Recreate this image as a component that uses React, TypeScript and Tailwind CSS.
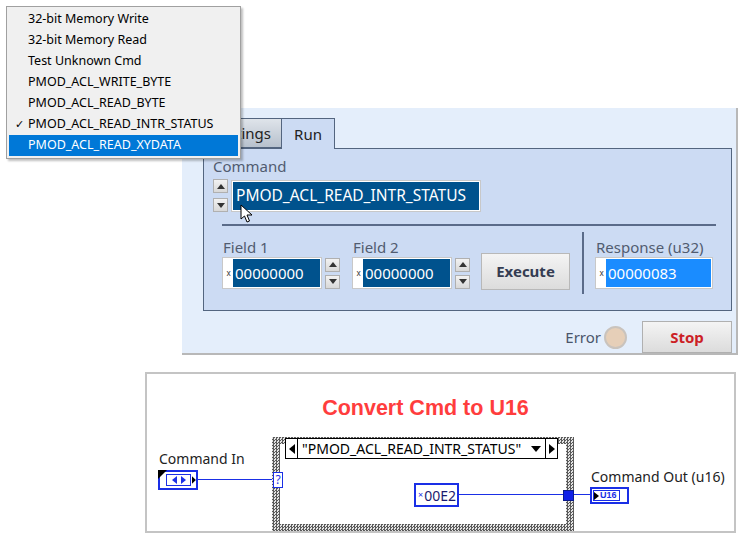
import React from "react";

const ui = "font-['Noto_Sans','Open_Sans',sans-serif]";

const menuItems = [
  "32-bit Memory Write",
  "32-bit Memory Read",
  "Test Unknown Cmd",
  "PMOD_ACL_WRITE_BYTE",
  "PMOD_ACL_READ_BYTE",
  "PMOD_ACL_READ_INTR_STATUS",
  "PMOD_ACL_READ_XYDATA",
];

function Tri({ down }: { down?: boolean }) {
  return (
    <svg width="8" height="5" viewBox="0 0 8 5">
      {down ? <polygon points="0,0 8,0 4,5" fill="#333" /> : <polygon points="0,5 8,5 4,0" fill="#333" />}
    </svg>
  );
}

function SpinBtn({ down }: { down?: boolean }) {
  return (
    <div className="flex h-[14px] w-[15px] items-center justify-center border border-[#b0b0b0] bg-gradient-to-b from-[#f2f2f2] to-[#d8d8d8]">
      <Tri down={down} />
    </div>
  );
}

function Spinner() {
  return (
    <div className="flex flex-col gap-[3px]">
      <SpinBtn />
      <SpinBtn down />
    </div>
  );
}

function NumField({ value, bright }: { value: string; bright?: boolean }) {
  return (
    <div className="flex h-[32px] items-stretch border border-[#c8c8c8] bg-white p-[1px]">
      <span className="flex w-[9px] items-center justify-center text-[8px] leading-none text-[#333]">x</span>
      <div
        className={`flex flex-1 items-center pl-[2px] text-[15px] text-white ${bright ? "bg-[#1a8cff]" : "bg-[#00528d]"}`}
      >
        {value}
      </div>
    </div>
  );
}

function Cursor() {
  return (
    <svg className="absolute left-[240px] top-[204px]" width="14" height="20" viewBox="0 0 14 20">
      <path d="M1 1 L1 15 L4.5 12 L7 18 L9.5 17 L7 11 L12 11 Z" fill="#fff" stroke="#000" strokeWidth="1" />
    </svg>
  );
}

function Panel() {
  return (
    <div className="ml-[182px] mt-[108px] flex h-[247px] w-[556px] flex-col border-b-2 border-r-2 border-[#b8b8b8] bg-[#e4eefb] pl-[21px] pt-[10px]">
      {/* tabs */}
      <div className="relative z-10 flex h-[30px] items-end">
        <div className="flex h-[30px] w-[79px] items-center justify-end border border-[#53657f] bg-gradient-to-b from-[#dfe4ea] to-[#b7c1cd] pr-[10px] text-[15px] text-[#222]">
          Settings
        </div>
        <div className="-mb-px flex h-[31px] w-[53px] items-center justify-center border border-b-0 border-l-0 border-[#53657f] bg-[#ccdbf3] text-[15px] text-[#222]">
          Run
        </div>
      </div>
      <div className="flex h-[163px] w-[529px] flex-col border border-[#53657f] bg-[#ccdbf3]">
        <div className="ml-[9px] mt-[8px] text-[15px] leading-[18px] text-[#515c70]">Command</div>
        <div className="ml-[9px] mt-[4px] flex items-center gap-[3px]">
          <div className="flex flex-col gap-[5px]">
            <SpinBtn />
            <SpinBtn down />
          </div>
          <div className="flex h-[32px] w-[250px] border border-[#c8c8c8] bg-white p-[1px]">
            <div className="flex flex-1 items-center bg-[#00528d] pl-[3px] text-[15.5px] text-white">
              PMOD_ACL_READ_INTR_STATUS
            </div>
          </div>
        </div>
        <div className="ml-[18px] mt-[12px] h-[2px] w-[494px] bg-[#5a6b89]" />
        <div className="ml-[18px] mt-[6px] flex h-[62px] items-stretch">
          <div className="flex flex-col pt-[6px]">
            <div className="ml-px text-[15px] leading-[18px] text-[#515c70]">Field 1</div>
            <div className="mt-[1px] flex items-center gap-[3px]">
              <div className="w-[100px]">
                <NumField value="00000000" />
              </div>
              <Spinner />
            </div>
          </div>
          <div className="ml-[12px] flex flex-col pt-[6px]">
            <div className="ml-px text-[15px] leading-[18px] text-[#515c70]">Field 2</div>
            <div className="mt-[1px] flex items-center gap-[3px]">
              <div className="w-[100px]">
                <NumField value="00000000" />
              </div>
              <Spinner />
            </div>
          </div>
          <div className="ml-[11px] flex items-start pt-[21px]">
            <div className="flex h-[37px] w-[89px] items-center justify-center border border-[#b8b8b8] bg-gradient-to-b from-[#f4f4f4] to-[#dcdcdc] text-[15px] font-bold text-[#343c52]">
              Execute
            </div>
          </div>
          <div className="ml-[12px] w-[2px] bg-[#5a6b89]" />
          <div className="ml-[11px] flex flex-col pt-[6px]">
            <div className="ml-px text-[15px] leading-[18px] text-[#515c70]">Response (u32)</div>
            <div className="mt-[1px] w-[118px]">
              <NumField value="00000083" bright />
            </div>
          </div>
        </div>
      </div>
      <div className="mr-[4px] mt-[10px] flex items-center justify-end">
        <span className="text-[15px] text-[#4a556a]">Error</span>
        <div className="ml-[3px] h-[23px] w-[23px] rounded-full border-2 border-[#c9c3bd] bg-[#e6cfb8]" />
        <div className="ml-[15px] flex h-[32px] w-[90px] items-center justify-center border border-[#b0b0b0] bg-gradient-to-b from-[#f4f4f4] to-[#dcdcdc] text-[15px] font-bold text-[#cc1f26]">
          Stop
        </div>
      </div>
    </div>
  );
}

function Menu() {
  return (
    <div className={`absolute left-[6px] top-[6px] z-20 w-[235px] border border-[#a0a0a0] bg-[#f0f0f0] px-[2px] py-[2px] shadow-[2px_2px_2px_rgba(0,0,0,0.25)] ${ui}`}>
      {menuItems.map((item, i) => {
        const sel = i === menuItems.length - 1;
        const checked = i === 5;
        return (
          <div
            key={item}
            className={`relative flex h-[21px] items-center pl-[19px] text-[12.5px] ${sel ? "bg-[#0078d7] text-white" : "text-black"}`}
          >
            {checked && <span className="absolute left-[6px] text-[11px]">✓</span>}
            {item}
          </div>
        );
      })}
    </div>
  );
}

const checker =
  "bg-[repeating-conic-gradient(#5a5a5a_0_25%,#e4e4e4_0_50%)] bg-[length:3px_3px]";

function Diagram() {
  return (
    <div className={`relative ml-[145px] mt-[17px] h-[161px] w-[591px] border-2 border-[#c4c4c4] bg-white ${ui}`}>
      <div className="mr-[30px] mt-[22px] text-center font-['Liberation_Sans',Arial,sans-serif] text-[21.5px] font-bold leading-[24px] text-[#ff3d3d]">
        Convert Cmd to U16
      </div>

      {/* Command In */}
      <div className="absolute left-[12px] top-[76px] text-[14px] leading-[17px] text-[#222]">Command In</div>
      <div className="absolute left-[11px] top-[96px] flex h-[20px] w-[40px] items-center border-2 border-[#1a2fe6] bg-white">
        <svg className="absolute -left-[2px] -top-[2px]" width="9" height="9" viewBox="0 0 9 9">
          <polygon points="0,0 9,0 0,9" fill="#000" />
        </svg>
        <div className="ml-[6px] flex h-[12px] w-[26px] items-center justify-center border border-[#1a2fe6]">
          <svg width="14" height="8" viewBox="0 0 14 8">
            <polygon points="0,4 5,0 5,8" fill="#1a2fe6" />
            <polygon points="14,4 9,0 9,8" fill="#1a2fe6" />
          </svg>
        </div>
        <svg className="ml-[1px]" width="4" height="8" viewBox="0 0 4 8">
          <polygon points="0,0 4,4 0,8" fill="#000" />
        </svg>
      </div>
      {/* wire in */}
      <div className="absolute left-[51px] top-[105px] h-px w-[76px] bg-[#1a2fe6]" />

      {/* case structure */}
      <div className={`absolute left-[125px] top-[63px] h-[94px] w-[302px] ${checker}`}>
        <div className="absolute bottom-[7px] left-[8px] right-[8px] top-[7px] bg-white" />
        <div className="absolute left-[13px] top-[1px] flex h-[21px] w-[273px] items-center border border-black bg-white text-[14px] text-black">
          <div className="flex h-full w-[12px] items-center justify-center border-r border-black">
            <svg width="6" height="10" viewBox="0 0 6 10">
              <polygon points="6,0 0,5 6,10" fill="#000" />
            </svg>
          </div>
          <span className="ml-[4px] flex-1">"PMOD_ACL_READ_INTR_STATUS"</span>
          <svg className="mr-[4px]" width="10" height="6" viewBox="0 0 10 6">
            <polygon points="0,0 10,0 5,6" fill="#000" />
          </svg>
          <div className="flex h-full w-[12px] items-center justify-center border-l border-black">
            <svg width="6" height="10" viewBox="0 0 6 10">
              <polygon points="0,0 6,5 0,10" fill="#000" />
            </svg>
          </div>
        </div>
        {/* selector terminal */}
        <div className="absolute left-[1px] top-[35px] flex h-[16px] w-[10px] items-center justify-center border border-[#1a2fe6] bg-white text-[12px] leading-none text-[#1a2fe6]">
          ?
        </div>
        {/* constant */}
        <div className="absolute left-[142px] top-[46px] flex h-[24px] w-[45px] items-center border-2 border-[#1a2fe6] bg-white pl-[2px] text-[14px] text-[#1a2fe6]">
          <span className="mr-[1px] text-[9px]">×</span>
          <span className="text-[#1a1a6e]">00E2</span>
        </div>
        {/* wire inside */}
        <div className="absolute left-[187px] top-[57px] h-px w-[105px] bg-[#1a2fe6]" />
        {/* tunnel */}
        <div className="absolute left-[291px] top-[53px] h-[11px] w-[11px] border border-[#0a1a8a] bg-[#1020e8]" />
      </div>

      {/* wire out */}
      <div className="absolute left-[427px] top-[120px] h-px w-[17px] bg-[#1a2fe6]" />
      <div className="absolute left-[444px] top-[94px] text-[14px] leading-[17px] text-[#222]">Command Out (u16)</div>
      <div className="absolute left-[443px] top-[113px] flex h-[17px] w-[39px] items-center border-2 border-[#1a2fe6] bg-white pl-[1px]">
        <div className="flex h-[11px] items-center border border-[#1a2fe6] pr-[2px]">
          <svg width="5" height="8" viewBox="0 0 5 8">
            <polygon points="0,0 5,4 0,8" fill="#000" />
          </svg>
          <span className="ml-px font-['Liberation_Sans',sans-serif] text-[9px] font-bold leading-none text-[#1a2fe6]">U16</span>
        </div>
      </div>
    </div>
  );
}

export default function App() {
  return (
    <div className={`relative h-[534px] w-[738px] overflow-hidden bg-white ${ui}`}>
      <div className="flex flex-col">
        <Panel />
        <Diagram />
      </div>
      <Cursor />
      <Menu />
    </div>
  );
}
